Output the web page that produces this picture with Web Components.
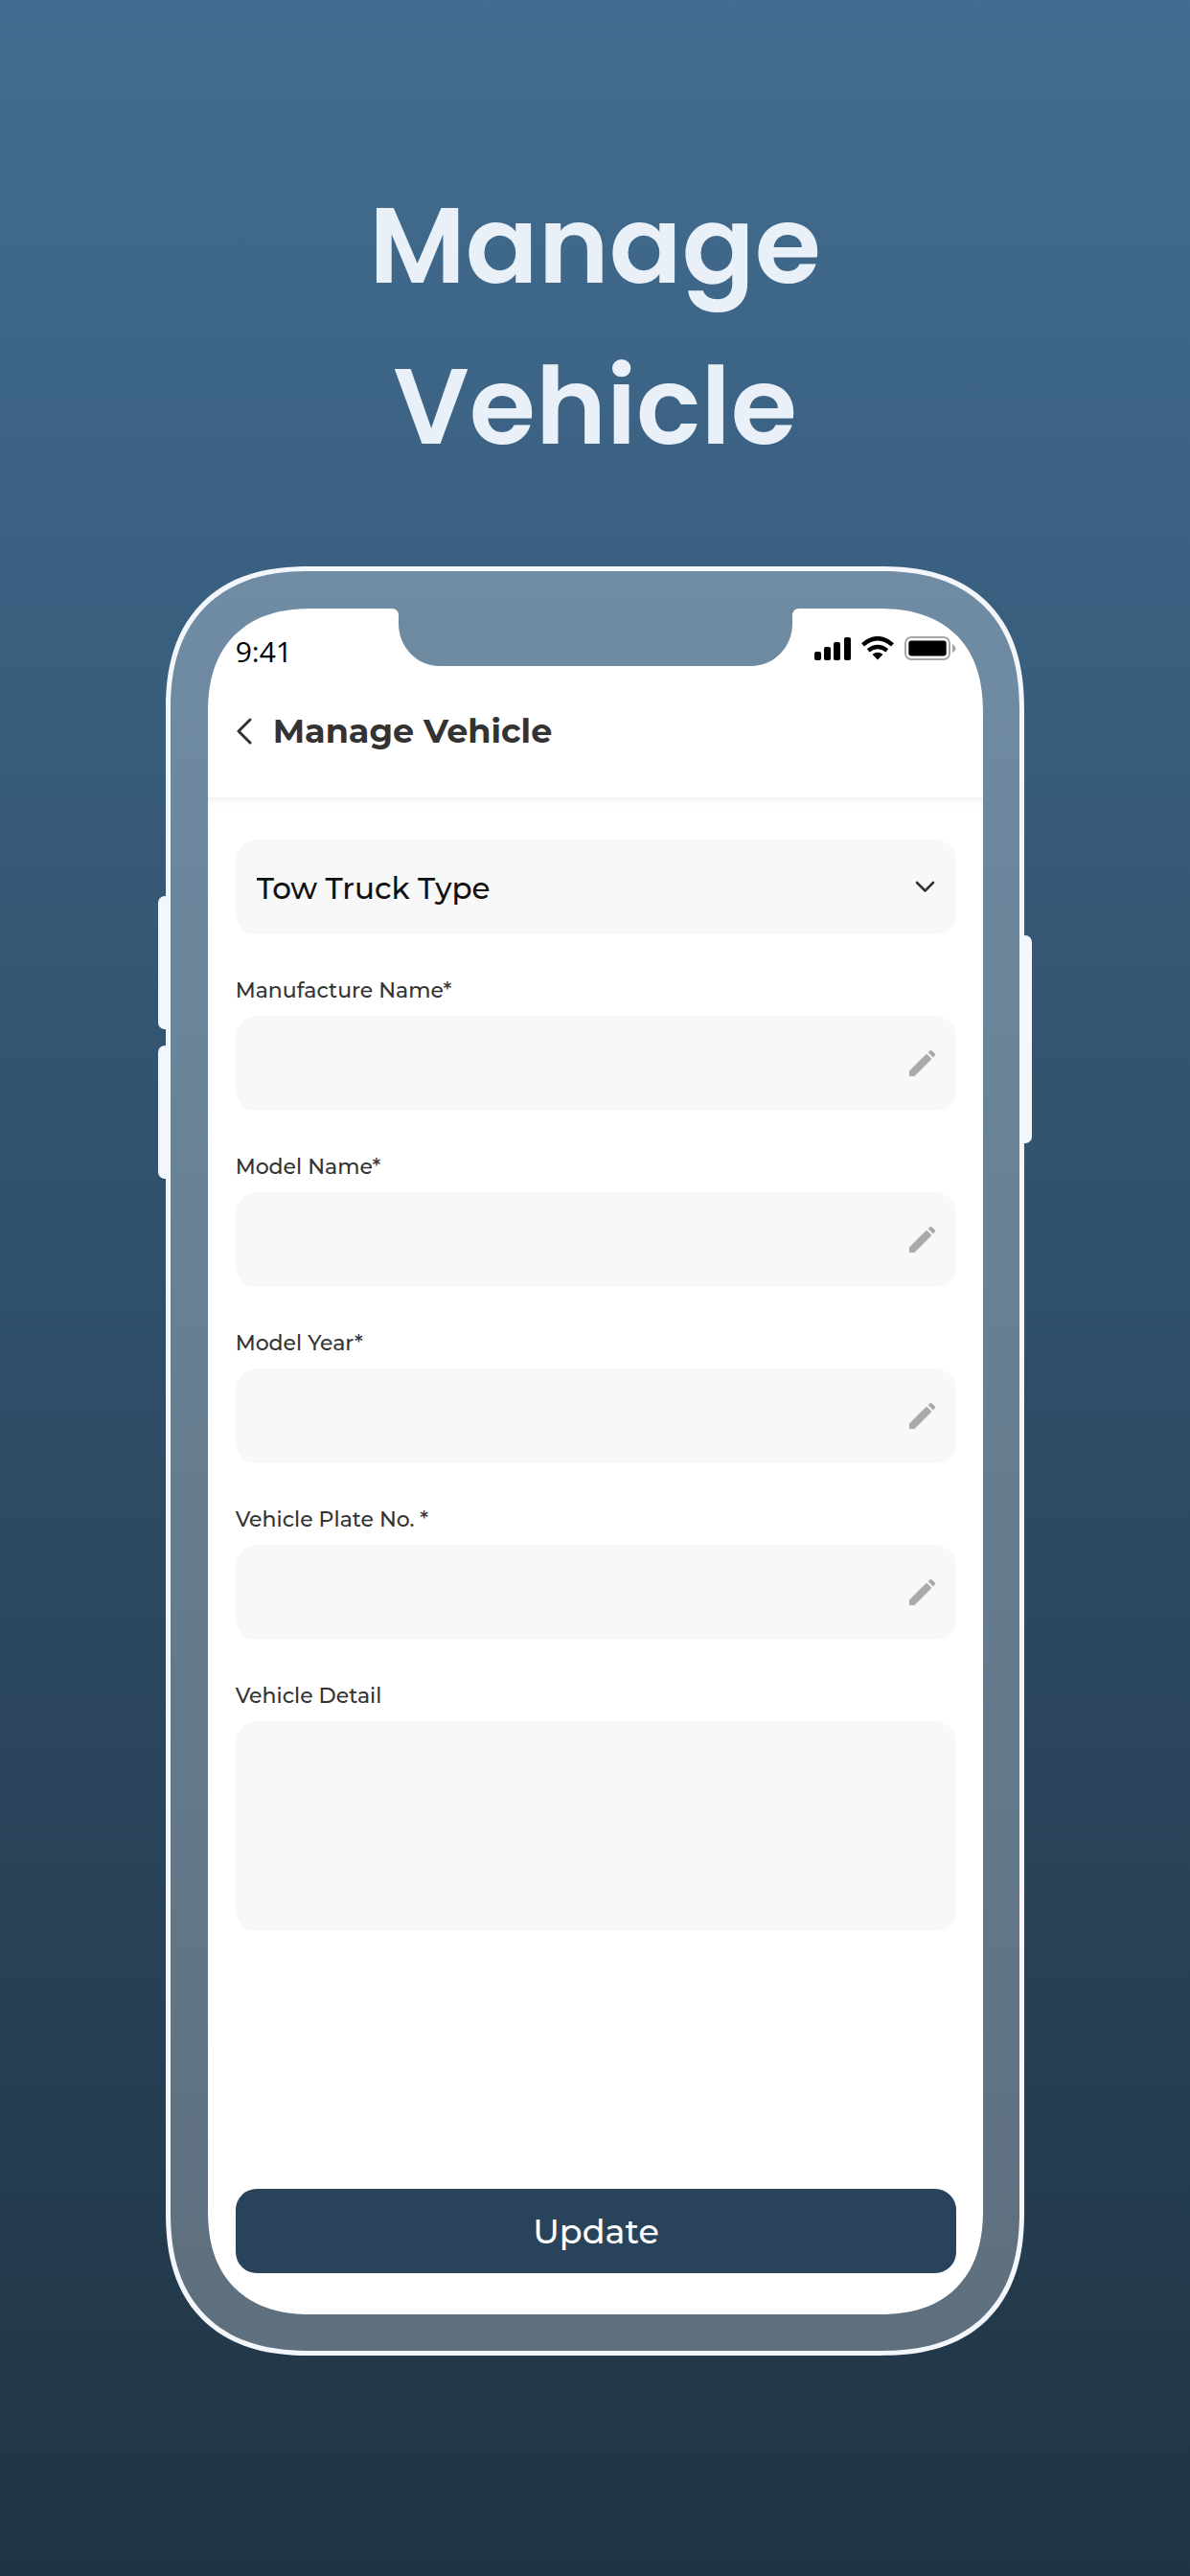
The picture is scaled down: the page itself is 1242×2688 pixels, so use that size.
<!DOCTYPE html>
<html lang="en">
<head>
  <meta charset="utf-8">
  <title>Manage Vehicle</title>
  <style>
    body {
      margin: 0;
      min-height: 100vh;
      background: linear-gradient(#426d90 0%, #3a6081 22%, #33546f 42%, #294359 72%, #203445 100%);
      font-family: Montserrat, "Noto Sans", sans-serif;
    }
  </style>
</head>
<body>
  <promo-page>
    <span slot="title">Manage Vehicle</span>
    <phone-frame>
      <status-bar></status-bar>
      <screen-header>Manage Vehicle</screen-header>
      <vehicle-form></vehicle-form>
    </phone-frame>
  </promo-page>

  <script>
    function define(name, html) {
      const template = document.createElement('template');
      template.innerHTML = html;

      window.customElements.define(name, class extends HTMLElement {
        constructor() {
          super();
          this.attachShadow({ mode: 'open' });
          this.shadowRoot.appendChild(template.content.cloneNode(true));
        }
      });
    }

    define('status-bar', `
      <style>
        :host {
          display: flex;
          justify-content: space-between;
          align-items: center;
          padding: 20px 28px 0 29px;
          height: 50px;
          color: #000;
          font: 30px/40px "Open Sans", "Noto Sans", sans-serif;
        }
        .icons { display: flex; align-items: center; gap: 11px; padding-bottom: 7px; }
        svg { display: block; }
      </style>
      <span>9:41</span>
      <div class="icons">
        <svg width="38" height="24" viewBox="0 0 38 24">
          <rect x="0" y="15" width="7" height="9" rx="2"/>
          <rect x="10" y="10" width="7" height="14" rx="2"/>
          <rect x="20" y="5" width="7" height="19" rx="2"/>
          <rect x="31" y="0" width="7" height="24" rx="2"/>
        </svg>
        <svg width="34" height="25" viewBox="0 0 34 25">
          <g fill="none" stroke="#000" stroke-width="4.400">
            <path d="M1.500 8.800 Q17 -4.500 32.500 8.800"/>
            <path d="M7.200 14.800 Q17 7 26.800 14.800"/>
          </g>
          <path d="M11.500 18.800 Q17 14.800 22.500 18.800 L17 24.500Z"/>
        </svg>
        <svg width="54" height="25" viewBox="0 0 54 25">
          <rect x="1" y="1" width="46" height="23" rx="6" fill="none" stroke="#a6a6a6" stroke-width="2"/>
          <rect x="4.300" y="4.500" width="39.400" height="16" rx="3"/>
          <path d="M50 8 Q53.500 10 53.500 12.500 T50 17Z" fill="#a6a6a6"/>
        </svg>
      </div>
    `);

    define('screen-header', `
      <style>
        :host {
          display: flex;
          align-items: center;
          gap: 22px;
          height: 116px;
          padding: 0 28px 11px 29px;
          border-bottom: 4px solid #f6f6f6;
          box-shadow: 0 3px 6px rgba(0, 0, 0, .02);
          color: #333;
        }
        button { display: block; padding: 0; border: 0; background: none; }
        svg { display: block; }
        h2 { margin: 0; font: 700 35px/48px Montserrat, "Noto Sans", sans-serif; }
      </style>
      <button type="button" aria-label="Back">
        <svg width="17" height="28" viewBox="0 0 17 28">
          <path d="M15 2 L3 14 L15 26" fill="none" stroke="#333" stroke-width="3" stroke-linecap="round" stroke-linejoin="round"/>
        </svg>
      </button>
      <h2><slot></slot></h2>
    `);

    // Text box with a label above and a pencil at its right end.
    define('edit-field', `
      <style>
        :host { display: block; }
        label {
          display: block;
          margin-bottom: 11px;
          color: #333;
          font-size: 22px;
          font-weight: 500;
          line-height: 30px;
        }
        .box {
          display: flex;
          align-items: center;
          height: 99px;
          padding-right: 22px;
          border-radius: 22px;
          background: #f8f8f8;
        }
        input {
          flex: 1;
          min-width: 0;
          height: 100%;
          padding: 0 22px;
          border: 0;
          background: none;
          font: 30px "Noto Sans", sans-serif;
        }
      </style>
      <label for="field"><slot></slot></label>
      <div class="box">
        <input id="field" type="text">
        <svg width="27" height="27" viewBox="0 0 27 27" fill="#aaa">
          <path d="M0 21.500 L18 3.500 L23.500 9 L5.500 27 H0Z"/>
          <path d="M19.500 2 L21 .700 Q22.500 -.700 24 .700 L26.300 3 Q27.700 4.500 26.300 6 L25 7.500Z"/>
        </svg>
      </div>
    `);

    define('vehicle-form', `
      <style>
        :host { display: flex; flex: 1; }
        form {
          display: flex;
          flex: 1;
          flex-direction: column;
          gap: 44px;
          padding: 40px 28px 43px 29px;
        }
        .select {
          display: flex;
          align-items: center;
          height: 99px;
          padding-right: 22px;
          border-radius: 22px;
          background: #f8f8f8;
        }
        select {
          flex: 1;
          height: 100%;
          padding: 2px 22px 0;
          border: 0;
          background: none;
          appearance: none;
          color: #111;
          font: 500 31px Montserrat, "Noto Sans", sans-serif;
        }
        label {
          display: block;
          margin-bottom: 11px;
          color: #333;
          font-size: 22px;
          font-weight: 500;
          line-height: 30px;
        }
        textarea {
          display: block;
          box-sizing: border-box;
          width: 100%;
          height: 219px;
          padding: 22px;
          border: 0;
          border-radius: 22px;
          background: #f8f8f8;
          font: 30px "Noto Sans", sans-serif;
          resize: none;
        }
        button {
          height: 88px;
          margin-top: auto;
          border: 0;
          border-radius: 22px;
          background: #29435a;
          color: #fff;
          font: 500 35px Montserrat, "Noto Sans", sans-serif;
        }
      </style>
      <form>
        <div class="select">
          <select aria-label="Tow Truck Type">
            <option>Tow Truck Type</option>
          </select>
          <svg width="21" height="13" viewBox="0 0 21 13">
            <path d="M2 2 L10.500 10.500 L19 2" fill="none" stroke="#333" stroke-width="2.600" stroke-linecap="round" stroke-linejoin="round"/>
          </svg>
        </div>
        <edit-field>Manufacture Name*</edit-field>
        <edit-field>Model Name*</edit-field>
        <edit-field>Model Year*</edit-field>
        <edit-field>Vehicle Plate No. *</edit-field>
        <div>
          <label for="detail">Vehicle Detail</label>
          <textarea id="detail"></textarea>
        </div>
        <button type="button">Update</button>
      </form>
    `);

    define('phone-frame', `
      <style>
        :host {
          display: block;
          position: relative;
          box-sizing: border-box;
          border: 5px solid #f3f6fa;
          border-radius: 130px;
          padding: 39px 38px 38px 39px;
          background: linear-gradient(#708ca4, #698397 30%, #5e6f7d);
        }
        .screen {
          display: flex;
          flex-direction: column;
          min-height: 1780px;
          border-radius: 92px;
          background: #fff;
          overflow: hidden;
        }
        @supports (corner-shape: squircle) {
          :host { border-radius: 150px; corner-shape: superellipse(1.25); }
          .screen { border-radius: 110px; corner-shape: superellipse(1.25); }
        }
        .notch {
          position: absolute;
          top: 38px;
          left: 50%;
          width: 425px;
          margin-left: -212px;
          fill: #6e8aa1;
        }
        .key {
          position: absolute;
          width: 8px;
          background: #f3f6fa;
        }
        .left { right: 100%; margin-right: 5px; height: 139px; border-radius: 7px 0 0 7px; }
        .up { top: 339px; }
        .down { top: 495px; }
        .power { left: 100%; margin-left: 5px; top: 380px; height: 217px; border-radius: 0 7px 7px 0; }
      </style>
      <div class="key left up"></div>
      <div class="key left down"></div>
      <div class="key power"></div>
      <div class="screen"><slot></slot></div>
      <svg class="notch" viewBox="0 0 425 61">
        <path d="M0 0 H425 V1 Q418 1 418 9 V17 C418 41 399 61 375 61 H50 C26 61 7 41 7 17 V9 Q7 1 0 1Z"/>
      </svg>
    `);

    define('promo-page', `
      <style>
        :host {
          display: flex;
          flex-direction: column;
          align-items: center;
          padding: 172px 0 230px;
        }
        h1 {
          margin: 0 0 83px;
          width: 600px;
          color: #e9f0f7;
          font: 600 112px/168px Poppins, Inter, sans-serif;
          text-align: center;
        }
        ::slotted(phone-frame) { width: 72.2%; }
      </style>
      <h1><slot name="title"></slot></h1>
      <slot></slot>
    `);
  </script>
</body>
</html>
